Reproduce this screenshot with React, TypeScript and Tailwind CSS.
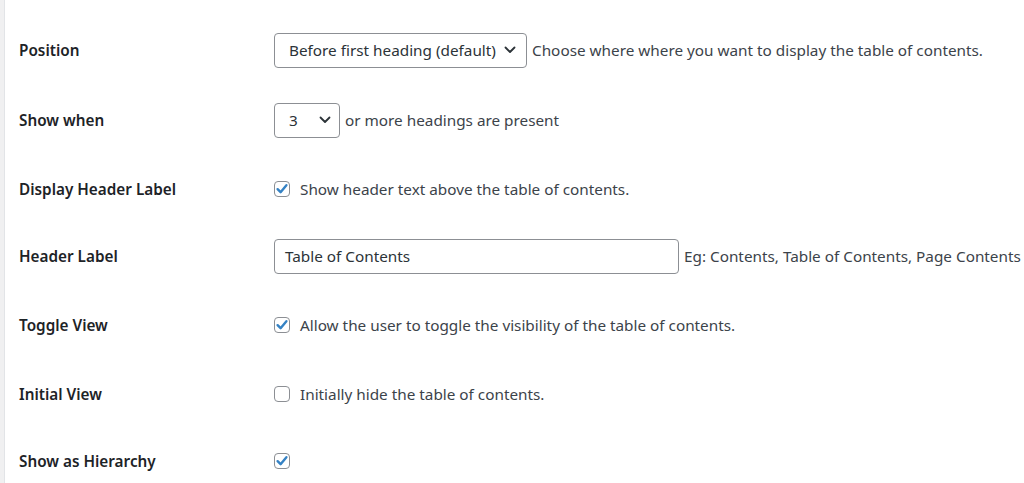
import React from "react";

const font = { fontFamily: '"Noto Sans", "Open Sans", sans-serif' };

function Chevron() {
  return (
    <svg width="12" height="8" viewBox="0 0 12 8" fill="none" className="shrink-0">
      <path d="M1.5 1.5 L6 6 L10.5 1.5" stroke="#2c3338" strokeWidth="1.8" strokeLinecap="round" strokeLinejoin="round" />
    </svg>
  );
}

function Checkbox({ checked }: { checked: boolean }) {
  return (
    <span className="w-[16px] h-[16px] shrink-0 rounded-[4px] border border-[#8c8f94] bg-white flex items-center justify-center">
      {checked && (
        <svg width="14" height="14" viewBox="0 0 14 14" fill="none">
          <path d="M2.6 7.2 L5.6 10.2 L11.4 3.2" stroke="#3582c4" strokeWidth="2.4" strokeLinecap="round" strokeLinejoin="round" />
        </svg>
      )}
    </span>
  );
}

function Row({ label, h, children }: { label: string; h: string; children?: React.ReactNode }) {
  return (
    <div className={`flex items-center ${h}`}>
      <div className="w-[255px] shrink-0 text-[15.3px] font-semibold text-[#1d2327]">{label}</div>
      <div className="flex items-center text-[15.3px] text-[#3c434a]">{children}</div>
    </div>
  );
}

export default function App() {
  return (
    <div className="w-[1024px] h-[483px] overflow-hidden bg-white flex" style={font}>
      <div className="w-[5px] shrink-0 bg-[#f0f0f1] border-r border-[#e2e4e7]" />
      <div className="flex-1 pl-[14px] pt-[15px]">
        <Row label="Position" h="h-[70px]">
          <div className="w-[253px] h-[35px] rounded-[4px] border border-[#8c8f94] bg-white flex items-center justify-between pl-[14px] pr-[10px] text-[#2c3338]">
            <span>Before first heading (default)</span>
            <Chevron />
          </div>
          <span className="ml-[5px]">Choose where where you want to display the table of contents.</span>
        </Row>
        <Row label="Show when" h="h-[70px]">
          <div className="w-[66px] h-[35px] rounded-[4px] border border-[#8c8f94] bg-white flex items-center justify-between pl-[14px] pr-[8px] text-[#2c3338]">
            <span>3</span>
            <Chevron />
          </div>
          <span className="ml-[5px]">or more headings are present</span>
        </Row>
        <Row label="Display Header Label" h="h-[68px]">
          <Checkbox checked />
          <span className="ml-[10px]">Show header text above the table of contents.</span>
        </Row>
        <Row label="Header Label" h="h-[66px]">
          <div className="w-[405px] h-[35px] rounded-[4px] border border-[#8c8f94] bg-white flex items-center pl-[10px] text-[#2c3338]">
            Table of Contents
          </div>
          <span className="ml-[5px]">Eg: Contents, Table of Contents, Page Contents</span>
        </Row>
        <Row label="Toggle View" h="h-[72px]">
          <Checkbox checked />
          <span className="ml-[10px]">Allow the user to toggle the visibility of the table of contents.</span>
        </Row>
        <Row label="Initial View" h="h-[66px]">
          <Checkbox checked={false} />
          <span className="ml-[10px]">Initially hide the table of contents.</span>
        </Row>
        <Row label="Show as Hierarchy" h="h-[68px]">
          <Checkbox checked />
        </Row>
      </div>
    </div>
  );
}
